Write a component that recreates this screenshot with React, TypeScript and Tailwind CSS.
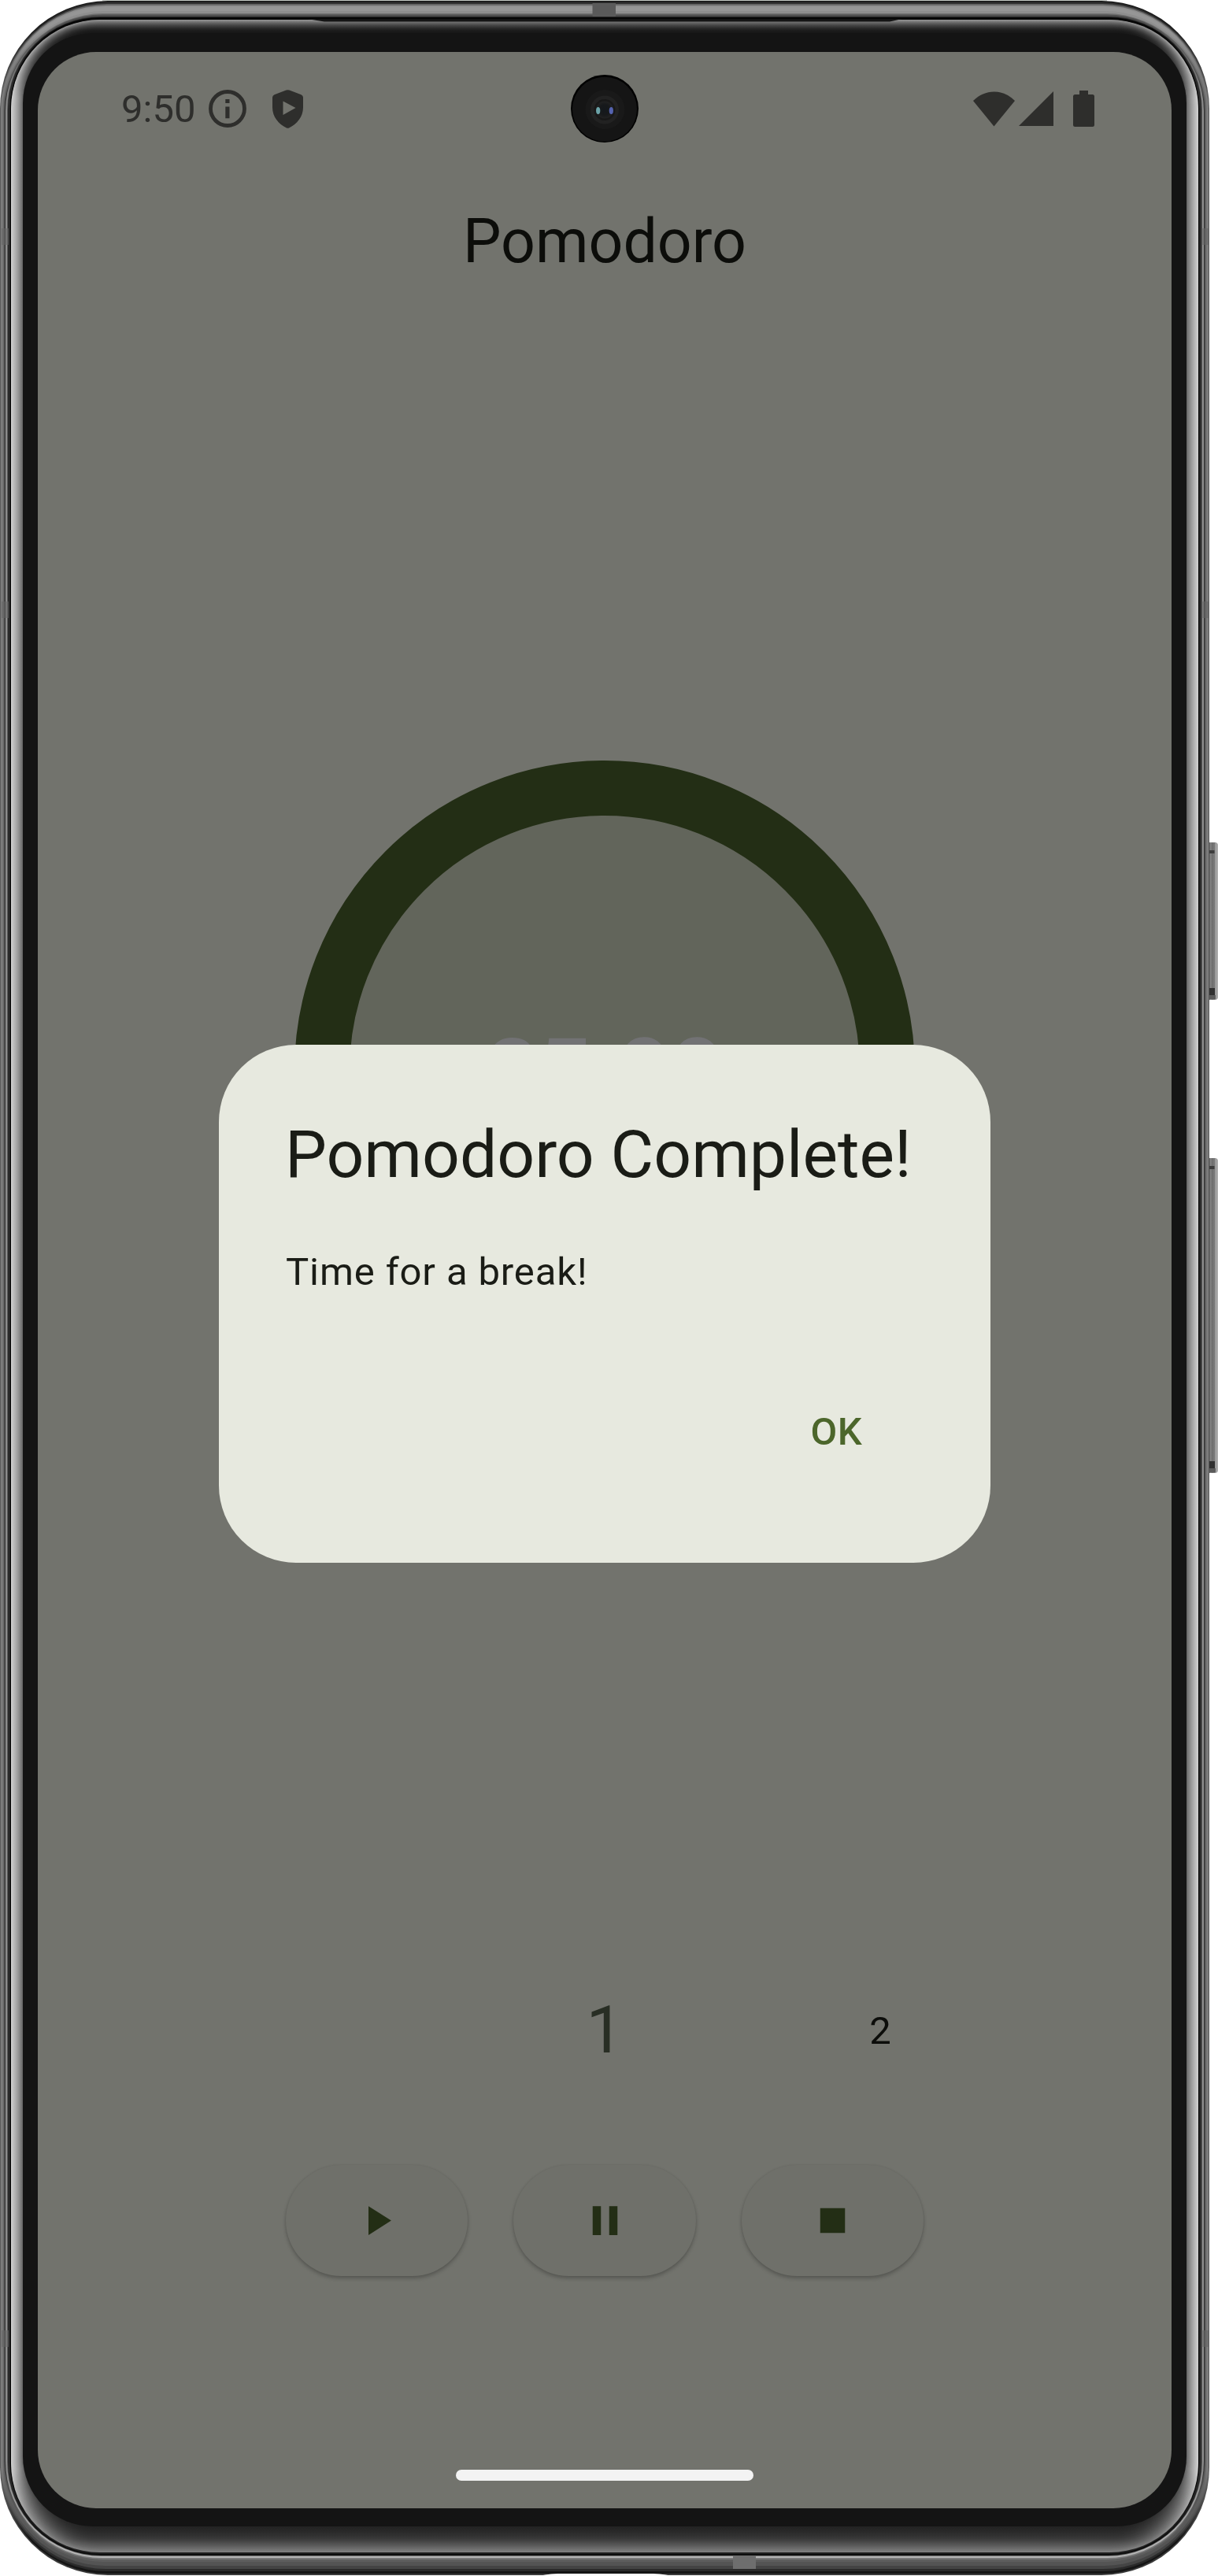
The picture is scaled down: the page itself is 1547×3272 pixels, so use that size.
import React from "react";

type Layer = { s: number; t: number; b: number; r: number; top: string; side: string; bottom: string };

const W = 1536;
const H = 3271;

const grey = (v: number) => {
  const n = Math.round(v);
  return `rgb(${n},${n},${n})`;
};

// Metal rail, from the outer edge inwards: insets for the sides, top and bottom.
const rail: Layer[] = [
  { s: 0, t: 1, b: 0, r: 137, top: "#1c1c1c", side: "#5c5c5c", bottom: "#3a3a3a" },
  { s: 1, t: 3, b: 2, r: 136, top: "#303030", side: "#7a7a7a", bottom: "#151515" },
  { s: 2, t: 5, b: 5, r: 134, top: "#666666", side: "#7e7e7e", bottom: "#2a2a2a" },
  { s: 3, t: 7, b: 8, r: 132, top: "#909090", side: "#747474", bottom: "#444444" },
  { s: 4, t: 9, b: 12, r: 130, top: "#969696", side: "#686868", bottom: "#545454" },
  { s: 5, t: 14, b: 17, r: 127, top: "#8e8e8e", side: "#505050", bottom: "#5e5e5e" },
  { s: 6, t: 17, b: 20, r: 125, top: "#707070", side: "#343434", bottom: "#7a7a7a" },
  { s: 7, t: 18.5, b: 22, r: 123, top: "#505050", side: "#8c8c8c", bottom: "#b4b4b4" },
  { s: 9, t: 20, b: 24, r: 120, top: "#4a4a4a", side: "#5c5c5c", bottom: "#707070" },
  { s: 10, t: 21, b: 25, r: 118, top: "#2a2a2a", side: "#262626", bottom: "#151515" },
  { s: 11.5, t: 22, b: 26, r: 116, top: "#080808", side: "#383838", bottom: "#0a0a0a" },
  { s: 12.5, t: 23, b: 27, r: 115, top: "#060606", side: "#080808", bottom: "#202020" },
];

// Curved glass edge fading into the bezel.
const glass: Layer[] = Array.from({ length: 30 }, (_, i) => {
  const f = i / 29;
  return {
    s: 14 + 15 * f,
    t: 25 + 17 * f,
    b: 29 + 33 * f,
    r: 113 - 24 * f,
    top: grey(20 + 128 * Math.pow(1 - f, 1.8)),
    side: grey(92 + 116 * Math.pow(1 - f, 0.75)),
    bottom: grey(20 + 108 * Math.pow(1 - f, 1.5)),
  };
});

const bezel: Layer = { s: 29, t: 42, b: 62, r: 89, top: "#141414", side: "#141414", bottom: "#141414" };
const layers = [...rail, ...glass, bezel];

function DeviceFrame() {
  return (
    <svg className="absolute inset-0" width="1547" height="3272" viewBox="0 0 1547 3272" aria-hidden="true">
      <defs>
        {layers.map((l, i) => (
          <linearGradient key={i} id={`rail${i}`} gradientUnits="userSpaceOnUse" x1="0" y1="0" x2="0" y2={H}>
            <stop offset={38 / H} stopColor={l.top} />
            <stop offset={125 / H} stopColor={l.side} />
            <stop offset={1 - 135 / H} stopColor={l.side} />
            <stop offset={1 - 46 / H} stopColor={l.bottom} />
          </linearGradient>
        ))}
        <linearGradient id="key" x1="0" y1="0" x2="1" y2="0">
          <stop offset="0" stopColor="#4a4a4a" />
          <stop offset="0.25" stopColor="#505050" />
          <stop offset="0.4" stopColor="#8a8a8a" />
          <stop offset="0.5" stopColor="#6c6c6c" />
          <stop offset="0.75" stopColor="#7c7c7c" />
          <stop offset="0.88" stopColor="#b8b8b8" />
          <stop offset="1" stopColor="#6a6a6a" />
        </linearGradient>
        <radialGradient id="lens">
          <stop offset="0" stopColor="#14181c" />
          <stop offset="0.6" stopColor="#17191b" />
          <stop offset="1" stopColor="#222222" />
        </radialGradient>
      </defs>
      {[[1070, 200], [1471, 400]].map(([y, h]) => (
        <g key={y}>
          <rect x="1532" y={y} width="14.5" height={h} rx="3" fill="url(#key)" />
          <rect x="1536" y={y + 10} width="6.5" height="4" fill="#3c3c3c" />
          <rect x="1535" y={y + h - 15} width="8" height="9" fill="#303030" />
          <rect x="1535" y={y + h - 6} width="9" height="5" fill="#5a5a5a" />
        </g>
      ))}
      <rect x="130" y="0" width="1276" height="1.5" fill="#c6cac6" />
      {layers.map((l, i) => (
        <rect key={i} x={l.s} y={l.t} width={W - 2 * l.s} height={H - l.t - l.b} rx={l.r} fill={`url(#rail${i})`} />
      ))}
      <path d="M390 24H1146L1130 27.500H412Z" fill="#141414" />
      <rect x="752.5" y="4" width="29.5" height="17" fill="#5a5a5a" />
      <rect x="931" y="3246" width="29" height="17" fill="#6e6e6e" />
      <path d="M684 3272C696 3269.500 704 3269 718 3269H820C834 3269 842 3269.500 854 3272Z" fill="#ffffff" />
      {[[2, 290], [2, 764], [2, 2960], [1526, 290], [1526, 764], [1526, 2960]].map(([x, y]) => (
        <rect key={`${x}-${y}`} x={x} y={y} width="9" height="21" fill="#666666" opacity="0.6" />
      ))}
    </svg>
  );
}

function Camera() {
  return (
    <svg className="absolute left-[677px] top-[29px]" width="86" height="86" viewBox="0 0 86 86" aria-hidden="true">
      <circle cx="43" cy="43" r="43" fill="#000000" />
      <circle cx="43" cy="43.700" r="41" fill="#151515" />
      <circle cx="43.500" cy="44" r="25" fill="#191919" />
      <circle cx="43" cy="44.500" r="18" fill="#222222" />
      <circle cx="43" cy="44.500" r="13.500" fill="#181818" />
      <circle cx="43" cy="44.500" r="11" fill="url(#lens)" />
      <ellipse cx="34.700" cy="45.500" rx="2.600" ry="4.500" fill="#6ba3a8" />
      <ellipse cx="51.300" cy="45.500" rx="2.600" ry="4.500" fill="#5563b0" />
    </svg>
  );
}

function StatusBar() {
  return (
    <div className="flex h-[144px] items-center pl-[106px] pr-[98px] text-[#2e2e2c]">
      <span className="w-[111px] text-[49px] leading-none">9:50</span>
      <svg width="48" height="48" viewBox="0 0 48 48" aria-hidden="true">
        <circle cx="24" cy="24" r="21.500" fill="none" stroke="currentColor" strokeWidth="4.800" />
        <path d="M21.300 12h5.200v5h-5.200zM21.300 21.500h5.200v14.800h-5.200z" fill="currentColor" />
      </svg>
      <svg className="ml-[33px]" width="39" height="49" viewBox="0 0 39 49" aria-hidden="true">
        <path
          d="M17.500.6Q19.500-.3 21.500.6L36.500 6.200Q39 7.200 39 9.800V22.500C39 34.500 31 43.500 21.500 48.300Q19.500 49.300 17.500 48.300C8 43.500 0 34.500 0 22.500V9.800Q0 7.200 2.500 6.200ZM13.500 14.500V32L29.500 23Z"
          fill="currentColor"
          fillRule="evenodd"
        />
      </svg>
      <div className="ml-auto flex items-center">
        <svg width="53" height="46" viewBox="0 0 53 46" aria-hidden="true">
          <path d="M26.500 45.500L0 13C15-2.500 38-2.500 53 13Z" fill="currentColor" />
        </svg>
        <svg className="ml-[5px]" width="44" height="44" viewBox="0 0 44 44" aria-hidden="true">
          <path d="M0 44L44 0V44Z" fill="currentColor" />
        </svg>
        <svg className="ml-[25px]" width="27" height="46" viewBox="0 0 27 46" aria-hidden="true">
          <path d="M8 0H19V5H24.500Q27 5 27 7.500V43.500Q27 46 24.500 46H2.500Q0 46 0 43.500V7.500Q0 5 2.500 5H8Z" fill="currentColor" />
        </svg>
      </div>
    </div>
  );
}

const controls = [
  { label: "Start", d: "M8 5v14l11-7z" },
  { label: "Pause", d: "M6 19h4V5H6zM14 5v14h4V5z" },
  { label: "Stop", d: "M6 6h12v12H6z" },
];

function Controls() {
  return (
    <div className="mt-[125px] flex justify-center gap-[58px]">
      {controls.map((c) => (
        <button
          key={c.label}
          aria-label={c.label}
          className="flex h-[141px] w-[231.500px] items-center justify-center rounded-full bg-[#6f706a] text-[#232e15] shadow-[0_3px_5px_rgba(0,0,0,0.24),0_0_3px_rgba(0,0,0,0.06)]"
        >
          <svg width="63" height="63" viewBox="0 0 24 24" fill="currentColor" aria-hidden="true">
            <path d={c.d} />
          </svg>
        </button>
      ))}
    </div>
  );
}

function CompleteDialog() {
  return (
    <div
      role="dialog"
      className="absolute left-[230px] top-[1261px] flex h-[658px] w-[980px] flex-col rounded-[98px] bg-[#e7e9df] px-[84px] pt-[84px] text-[#1a1c16]"
    >
      <h2 className="text-[84px] leading-[112px]">Pomodoro Complete!</h2>
      <p className="ml-px mt-[58px] text-[49px] leading-[70px] tracking-[0.875px]">Time for a break!</p>
      <button className="mr-[79px] mt-[133px] self-end text-[49px] font-medium leading-[70px] tracking-[0.350px] text-[#4c662b]">
        OK
      </button>
    </div>
  );
}

export default function App() {
  return (
    <div className="relative h-[3272px] w-[1547px] overflow-hidden bg-white pl-[48px] pt-[66px] font-['Roboto',sans-serif]">
      <DeviceFrame />
      <main className="relative flex h-[3120px] w-[1440px] flex-col overflow-hidden rounded-[74px] bg-[#72736d]">
        <StatusBar />
        <Camera />
        <header className="flex h-[190px] items-center justify-center pt-[4px]">
          <h1 className="text-[77px] leading-none text-[#0c0d0a]">Pomodoro</h1>
        </header>
        <div className="mt-[566px] flex size-[788px] shrink-0 items-center justify-center self-center rounded-full border-[70px] border-[#232e15] bg-[#62655b]">
          <span className="pt-[5px] text-[117px] font-bold leading-none text-[#727274]">25:00</span>
        </div>
        <div className="mt-[775px] grid h-[96px] grid-cols-[350px_350px_350px] items-center justify-center text-center">
          <span className="col-start-2 pt-[4px] text-[84px] leading-none text-[#282e24]">1</span>
          <span className="pt-[4px] text-[49px] leading-none text-[#0c0d0a]">2</span>
        </div>
        <Controls />
        <div className="mb-[35px] mt-auto h-[14px] w-[378px] self-center rounded-full bg-[#f3f3f3]" />
        <CompleteDialog />
      </main>
    </div>
  );
}
